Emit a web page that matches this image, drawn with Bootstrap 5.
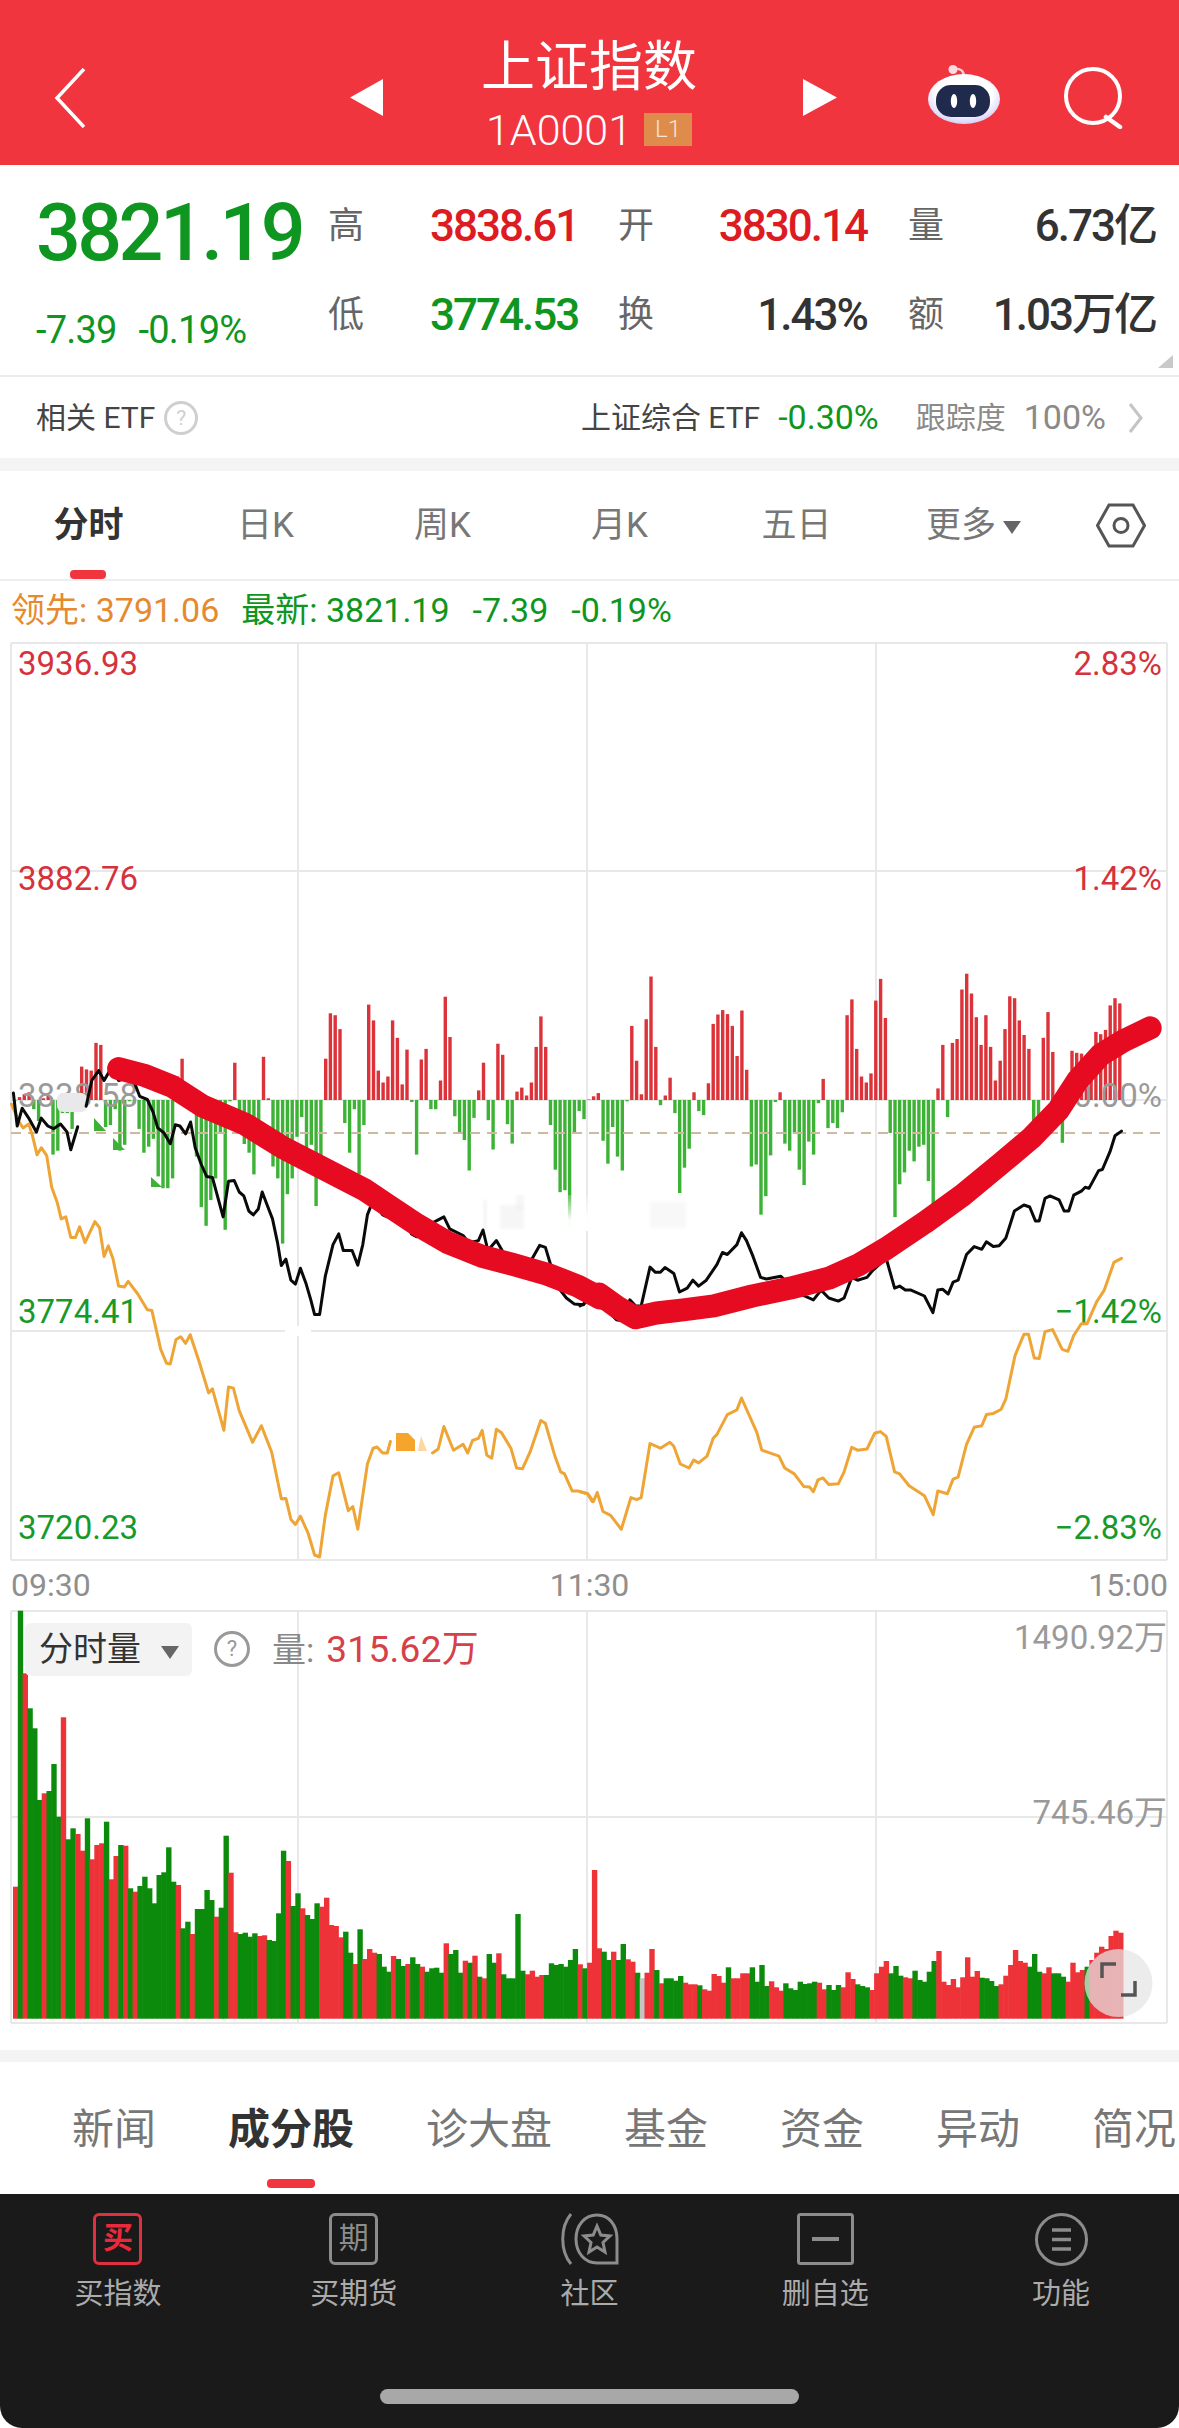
<!DOCTYPE html>
<html lang="zh-CN">
<head>
  <meta charset="UTF-8">
  <title>上证指数</title>
  <link href="https://cdn.jsdelivr.net/npm/bootstrap@5.3.3/dist/css/bootstrap.min.css" rel="stylesheet">
  <style>
    html, body { margin: 0; background: #fff; }
    body { width: 1179px; height: 2428px; overflow: hidden; font-family: Roboto, "Noto Sans CJK SC", sans-serif; color: #333; }
    svg { display: block; }
    svg text { font-family: Roboto, "Noto Sans CJK SC", sans-serif; }
    .up { color: #dc1c22; }
    .down { color: #0f9620; }

    .app-header { height: 165px; padding-top: 30px; background: #f0353f; color: #fff; }
    .hdr-back { width: 350px; padding-left: 54px; }
    .hdr-title { width: 420px; padding-right: 8px; }
    .hdr-title h1 { margin: -6px 0 0; font-size: 54px; line-height: 68px; font-weight: 400; letter-spacing: 0; }
    .hdr-code { font-size: 43px; line-height: 52px; font-weight: 300; margin-top: 2px; }
    .lv-tag { width: 48px; height: 33px; margin-left: 12px; background: #de8b4c; color: #f6e6d0; font-size: 24px; line-height: 33px; text-align: center; font-weight: 300; }

    .quote-box { height: 210px; padding-top: 16px; }
    .quote-left { width: 328px; padding-left: 36px; }
    .price-big { margin-top: 8px; height: 88px; font-size: 79px; line-height: 88px; font-weight: 500; letter-spacing: -3.6px; color: #0f9620; }
    .price-sub { margin-top: 31px; font-size: 38px; line-height: 44px; color: #0f9620; letter-spacing: -.8px; }
    .price-sub span + span { margin-left: 22px; }
    .quote-grid { display: grid; grid-template-columns: 102px 188px 100px 190px 60px 188px; grid-auto-rows: 89px; align-items: center; }
    .q-label { font-size: 36px; color: #666; }
    .q-val { font-size: 44px; font-weight: 500; letter-spacing: -2px; }
    .q-right { text-align: right; }
    .q-pad { padding-right: 41px; }
    .corner-mark { right: 6px; bottom: 7px; width: 0; height: 0; border-left: 15px solid transparent; border-bottom: 13px solid #c9c9c9; }

    .etf-row { height: 83px; border-top: 2px solid #ececec; padding: 0 36px; font-size: 30px; color: #444; }
    .help-dot { display: inline-block; border: 3px solid #cfcfcf; border-radius: 50%; color: #cfcfcf; text-align: center; }
    .etf-row .help-dot { width: 34px; height: 34px; margin-left: 9px; font-size: 21px; line-height: 28px; }
    .etf-num { font-size: 34px; }
    .etf-gray { color: #8a8a8a; }
    .etf-pct { margin-left: 18px; }
    .etf-track { margin-left: 37px; }
    .etf-chev { margin-left: 22px; }

    .gray-band { height: 13px; background: #f4f4f4; }
    .period-tabs { height: 110px; border-bottom: 2px solid #eee; }
    .period-tab { width: 177px; text-align: center; font-size: 35px; line-height: 110px; color: #777; position: relative; }
    .period-tab.on { color: #333; font-weight: 700; }
    .period-tab.on::after { content: ""; position: absolute; left: 70px; bottom: 0; width: 36px; height: 9px; border-radius: 4px; background: #f0353f; }
    .period-gear { width: 117px; }
    .caret-d { display: inline-block; width: 0; height: 0; margin-left: 7px; vertical-align: middle; border-left: 9px solid transparent; border-right: 9px solid transparent; border-top: 13px solid #666; }

    .info-row { height: 61px; padding-left: 11px; font-size: 34px; line-height: 58px; white-space: nowrap; }
    .info-lead { color: #e58a2f; margin-right: 22px; }
    .info-new { color: #0f9620; }
    .info-new span { margin-left: 23px; }

    .lbl { font-size: 33px; dominant-baseline: central; }
    .lbl-up { fill: #d5323c; }
    .lbl-down { fill: #169a2a; }
    .lbl-mid { fill: #9a9a9a; }
    .lbl-vol { fill: #9a9a9a; font-size: 33px; }

    .time-row { height: 48px; padding: 0 11px; font-size: 32px; line-height: 46px; color: #8f8f8f; }
    .vol-wrap { height: 414px; }
    .vol-chip { left: 25px; top: 13px; width: 167px; height: 53px; border-radius: 6px; background: #f3f3f3; font-size: 34px; line-height: 53px; padding-left: 14px; color: #333; white-space: nowrap; }
    .vol-chip .caret-d { margin-left: 20px; }
    .vol-help { left: 214px; top: 21px; width: 36px; height: 36px; border-color: #999; color: #999; font-size: 22px; line-height: 29px; }
    .vol-text { left: 272px; top: 13px; font-size: 34px; line-height: 53px; color: #888; white-space: nowrap; }
    .vol-text span { color: #d64048; margin-left: 12px; font-size: 37px; letter-spacing: .3px; }

    .news-tabs { height: 132px; padding-left: 72px; padding-top: 3px; gap: 72px; overflow: hidden; font-size: 42px; line-height: 129px; color: #777; white-space: nowrap; }
    .news-tab { position: relative; flex: none; }
    .news-tab.on { color: #333; font-weight: 700; }
    .news-tab.on::after { content: ""; position: absolute; left: 39px; bottom: 6px; width: 48px; height: 9px; border-radius: 4px; background: #f0353f; }

    .bottom-nav { height: 234px; padding-top: 19px; background: #1a1a1a; border-radius: 0 0 22px 22px; position: relative; }
    .nav-cell { width: 20%; text-align: center; color: #ababab; font-size: 29px; line-height: 40px; }
    .nav-ico { height: 52px; margin-bottom: 9px; display: flex; justify-content: center; }
    .ico-box { width: 49px; height: 52px; border: 3px solid #8c8c8c; border-radius: 6px; font-size: 30px; line-height: 44px; color: #8c8c8c; }
    .ico-box.red { border-color: #e0303f; color: #ea2a3c; font-weight: 700; }
    .home-bar { left: 380px; top: 195px; width: 419px; height: 15px; border-radius: 8px; background: #a8a8a8; }
  </style>
</head>
<body>

  <header class="app-header d-flex align-items-center">
    <div class="hdr-back">
      <svg width="32" height="60" viewBox="0 0 32 60"><path d="M30 1 L3 30 L30 59" fill="none" stroke="#fff" stroke-width="3.5"/></svg>
    </div>
    <svg width="33" height="37" viewBox="0 0 33 37"><path d="M33 0 V37 L0 18.5Z" fill="#fff"/></svg>
    <div class="hdr-title text-center">
      <h1>上证指数</h1>
      <div class="hdr-code d-flex justify-content-center align-items-center">1A0001<span class="lv-tag">L1</span></div>
    </div>
    <svg width="34" height="37" viewBox="0 0 34 37"><path d="M0 0 V37 L34 18.5Z" fill="#fff"/></svg>
    <svg class="ms-auto" width="72" height="66" viewBox="0 0 72 66" style="margin-right:64px">
      <defs><radialGradient id="robotHead" cx=".5" cy=".4" r=".65"><stop offset=".6" stop-color="#ffffff"/><stop offset="1" stop-color="#cbc4f5"/></radialGradient></defs>
      <path d="M25 4 C33 3 36 6 36 12" fill="none" stroke="#f6c9d2" stroke-width="2.500"/>
      <circle cx="25" cy="4.500" r="4.500" fill="#f9dbe0"/>
      <ellipse cx="36" cy="34" rx="36" ry="25" fill="url(#robotHead)"/>
      <rect x="8" y="20" width="54" height="32" rx="15" fill="#1f2a4d"/>
      <ellipse cx="26" cy="36" rx="3.200" ry="7" fill="#fff"/>
      <ellipse cx="45" cy="36" rx="3.200" ry="7" fill="#fff"/>
    </svg>
    <svg width="60" height="62" viewBox="0 0 60 62" style="margin-right:55px">
      <circle cx="29" cy="29" r="27" fill="none" stroke="#fff" stroke-width="4"/>
      <path d="M42 50 L56 60" stroke="#fff" stroke-width="4.500" stroke-linecap="round"/>
    </svg>
  </header>

  <section class="quote-box d-flex position-relative">
    <div class="quote-left">
      <div class="price-big">3821.19</div>
      <div class="price-sub"><span>-7.39</span><span>-0.19%</span></div>
    </div>
    <div class="quote-grid">
      <div class="q-label">高</div><div class="q-val up">3838.61</div>
      <div class="q-label">开</div><div class="q-val up q-right q-pad">3830.14</div>
      <div class="q-label">量</div><div class="q-val q-right">6.73亿</div>
      <div class="q-label">低</div><div class="q-val down">3774.53</div>
      <div class="q-label">换</div><div class="q-val q-right q-pad">1.43%</div>
      <div class="q-label">额</div><div class="q-val q-right">1.03万亿</div>
    </div>
    <span class="corner-mark position-absolute"></span>
  </section>

  <div class="etf-row d-flex align-items-center">
    <span>相关 ETF</span><span class="help-dot">?</span>
    <span class="ms-auto">上证综合 ETF</span>
    <span class="down etf-num etf-pct">-0.30%</span>
    <span class="etf-gray etf-track">跟踪度</span>
    <span class="etf-gray etf-num etf-pct">100%</span>
    <svg class="etf-chev" width="15" height="30" viewBox="0 0 15 30"><path d="M2 1 L13 15 L2 29" fill="none" stroke="#c4c4c4" stroke-width="3"/></svg>
  </div>

  <div class="gray-band"></div>

  <nav class="period-tabs d-flex">
    <div class="period-tab on">分时</div>
    <div class="period-tab">日K</div>
    <div class="period-tab">周K</div>
    <div class="period-tab">月K</div>
    <div class="period-tab">五日</div>
    <div class="period-tab">更多<span class="caret-d"></span></div>
    <div class="period-gear d-flex justify-content-center align-items-center">
      <svg width="50" height="45" viewBox="0 0 50 45"><path d="M1.500 22.500 L13 2 H37 L48.500 22.500 L37 43 H13Z" fill="none" stroke="#555" stroke-width="3"/><circle cx="25" cy="22.500" r="7" fill="none" stroke="#555" stroke-width="3"/></svg>
    </div>
  </nav>

  <div class="info-row">
    <span class="info-lead">领先: 3791.06</span><span class="info-new">最新: 3821.19<span>-7.39</span><span>-0.19%</span></span>
  </div>

  <svg id="priceChart" width="1179" height="920" viewBox="0 642 1179 920"></svg>

  <div class="time-row d-flex justify-content-between">
    <span>09:30</span><span>11:30</span><span>15:00</span>
  </div>

  <div class="vol-wrap position-relative">
    <svg id="volChart" width="1179" height="414" viewBox="0 1610 1179 414"></svg>
    <div class="vol-chip position-absolute">分时量<span class="caret-d"></span></div>
    <span class="help-dot vol-help position-absolute">?</span>
    <div class="vol-text position-absolute">量:<span>315.62万</span></div>
  </div>

  <div style="height:26px"></div>
  <div class="gray-band" style="height:12px"></div>

  <div class="news-tabs d-flex">
    <div class="news-tab">新闻</div>
    <div class="news-tab on">成分股</div>
    <div class="news-tab">诊大盘</div>
    <div class="news-tab">基金</div>
    <div class="news-tab">资金</div>
    <div class="news-tab">异动</div>
    <div class="news-tab">简况</div>
  </div>

  <footer class="bottom-nav d-flex">
    <div class="nav-cell">
      <div class="nav-ico"><div class="ico-box red">买</div></div>买指数
    </div>
    <div class="nav-cell">
      <div class="nav-ico"><div class="ico-box">期</div></div>买期货
    </div>
    <div class="nav-cell">
      <div class="nav-ico">
        <svg width="60" height="52" viewBox="0 0 60 52" fill="none" stroke="#8c8c8c" stroke-width="3">
          <path d="M12 1 C1 14 1 38 12 51"/>
          <path d="M38 2 C50 2 58 12 58 26 V50 H38 C26 50 17 40 17 26 C17 12 26 2 38 2Z"/>
          <path d="M38 13 L41.800 22 L51 23 L44 29.500 L46 39 L38 34 L30 39 L32 29.500 L25 23 L34.200 22Z"/>
        </svg>
      </div>社区
    </div>
    <div class="nav-cell">
      <div class="nav-ico">
        <svg width="57" height="52" viewBox="0 0 57 52"><rect x="1.500" y="1.500" width="54" height="49" rx="2" fill="none" stroke="#8c8c8c" stroke-width="3"/><path d="M15 26 H42" stroke="#8c8c8c" stroke-width="4"/></svg>
      </div>删自选
    </div>
    <div class="nav-cell">
      <div class="nav-ico">
        <svg width="53" height="53" viewBox="0 0 53 53" fill="none" stroke="#8c8c8c"><circle cx="26.500" cy="26.500" r="25" stroke-width="3"/><path d="M17 17 H36 M17 26.500 H36 M17 36 H36" stroke-width="3.500"/></svg>
      </div>功能
    </div>
    <div class="home-bar position-absolute"></div>
  </footer>

<script>
  // values below were read off the screenshot: x/y are positions in two crops of the chart
  const crop = (x0, y0, sx, sy) => ([x, y]) => [x0 + x / sx, y0 + y / sy];
  const left = crop(0, 950, 2.613, 2.529);
  const right = crop(580, 950, 2.613, 2.529);
  const pts = (list, fn) => list.map(fn).map(p => p[0].toFixed(1) + "," + p[1].toFixed(1)).join(" ");
  const line = (points, color, w) => `<polyline points="${points}" fill="none" stroke="${color}" stroke-width="${w}" stroke-linejoin="round" stroke-linecap="round"/>`;

  const blackA = [[35,362],[45,445],[58,400],[75,425],[95,460],[108,425],[125,445],[140,452],[158,440],[175,460],[185,505],[203,447]];
  const blackB = [[225,395],[240,330],[258,305],[272,330],[290,300],[310,330],[345,320],[365,370],[385,378],[400,410],[412,450],[428,462],[445,490],[458,442],[470,445],[485,465],[498,435],[510,500],[525,540],[540,573],[555,575],[583,675],[597,585],[612,583],[625,612],[637,622],[650,660],[662,670],[675,655],[685,612],[700,650],[712,680],[725,740],[735,798],[747,782],[760,835],[772,845],[785,805],[800,845],[812,885],[822,922],[835,922],[850,825],[870,745],[885,718],[897,760],[920,760],[935,797],[948,745],[960,670],[972,640],[985,650],[1000,670],[1012,675],[1025,650],[1050,680],[1070,700],[1075,718],[1088,725],[1100,700],[1130,690],[1160,675],[1175,705],[1210,722],[1225,740],[1250,735],[1262,708],[1275,760],[1297,735],[1315,765],[1345,815],[1360,820],[1385,790],[1410,747],[1425,752],[1440,800],[1460,855],[1480,880],[1500,895],[1525,897],[1545,870]];
  const blackC = [[0,900],[10,895],[25,875],[55,905],[70,910],[95,935],[110,938],[130,885],[145,900],[160,900],[183,802],[197,815],[210,815],[222,803],[245,818],[260,865],[280,855],[295,835],[310,850],[330,835],[358,795],[372,765],[385,770],[410,745],[422,715],[435,735],[452,775],[472,828],[487,832],[525,825],[540,840],[575,870],[610,885],[630,860],[650,880],[675,888],[690,880],[710,828],[725,835],[750,828],[765,810],[800,780],[822,855],[835,850],[850,860],[865,860],[900,875],[922,917],[935,860],[948,858],[962,870],[975,840],[988,835],[1010,770],[1030,750],[1050,757],[1062,738],[1080,750],[1095,748],[1113,728],[1135,660],[1160,645],[1175,650],[1190,685],[1200,685],[1215,628],[1228,622],[1252,632],[1265,660],[1277,660],[1290,620],[1310,610],[1320,600],[1330,603],[1355,558],[1365,555],[1385,510],[1398,470],[1415,458]];

  const orangeA = [[30,390],[50,435],[60,450],[75,440],[85,470],[97,518],[108,500],[122,520],[135,600],[150,640],[160,680],[172,675],[185,727],[197,727],[208,700],[222,740],[248,687],[260,702],[272,775],[283,748],[295,780],[310,850],[325,852],[335,838],[360,870],[385,910],[397,912],[420,1010],[435,1045],[445,1047],[460,985],[472,978],[485,995],[497,973],[520,1040],[545,1120],[555,1110],[585,1215],[597,1105],[610,1108],[625,1165],[660,1245],[683,1203],[710,1270],[735,1388],[747,1387],[760,1440],[772,1453],[785,1432],[805,1475],[822,1530],[835,1535],[850,1430],[870,1330],[885,1322],[910,1418],[922,1408],[935,1465],[960,1300],[975,1260],[985,1257],[1000,1272],[1012,1272],[1020,1243]];
  const orangeB = [[1130,1272],[1145,1262],[1160,1205],[1185,1265],[1210,1250],[1222,1272],[1235,1240],[1250,1235],[1260,1215],[1272,1278],[1285,1285],[1297,1212],[1310,1220],[1335,1260],[1350,1310],[1365,1312],[1385,1270],[1413,1190],[1425,1197],[1450,1280],[1465,1320],[1475,1325],[1495,1368],[1510,1368],[1535,1375],[1548,1395]];
  const orangeC = [[0,1370],[20,1375],[35,1395],[45,1372],[60,1420],[80,1430],[108,1465],[133,1385],[148,1390],[160,1385],[183,1248],[210,1260],[235,1245],[245,1255],[262,1300],[285,1310],[297,1290],[310,1297],[332,1280],[348,1235],[358,1225],[385,1175],[410,1163],[422,1133],[462,1220],[475,1265],[520,1280],[535,1310],[560,1325],[585,1357],[600,1358],[610,1370],[622,1340],[635,1335],[650,1352],[675,1350],[690,1320],[710,1258],[725,1265],[750,1262],[770,1222],[785,1218],[800,1230],[822,1320],[835,1325],[860,1355],[900,1380],[923,1428],[935,1368],[960,1375],[975,1338],[988,1333],[1010,1250],[1030,1207],[1050,1203],[1062,1175],[1080,1172],[1100,1162],[1113,1135],[1137,1025],[1160,972],[1172,972],[1187,1032],[1200,1033],[1215,965],[1235,960],[1260,1010],[1275,1015],[1290,975],[1310,945],[1325,945],[1350,890],[1370,860],[1395,790],[1415,780]];

  const penA = [[310,300],[380,318],[450,345],[530,395],[640,440],[740,500],[840,550],[950,605],[1020,650],[1090,695],[1170,740],[1260,775],[1340,795],[1430,820],[1510,850],[1568,880]];
  const penB = [[50,870],[100,905],[145,930],[200,918],[270,910],[350,900],[450,875],[550,855],[650,830],[730,795],[800,755],[900,690],[1000,620],[1100,540],[1180,475],[1250,405],[1300,330],[1360,265],[1420,230],[1490,197]];

  const flow = [380,372,365,360,400,430,375,368,515,505,410,410,450,370,295,302,305,235,240,445,440,400,505,490,380,385,450,510,495,475,570,600,600,575,320,275,378,385,520,648,695,630,575,460,705,380,285,410,488,510,565,450,270,375,545,575,740,615,575,470,420,515,490,645,570,275,160,165,200,435,510,400,565,440,138,178,305,335,320,178,222,340,252,382,515,277,250,400,400,330,118,220,418,460,478,555,422,355,285,428,502,237,265,438,487,358,348,368,335,245,168,245,440,553,610,605,700,458,405,425,378,370,362,480,538,445,520,555,380,192,280,365,175,67,245,390,368,323,410,612,548,500,360,405,415,337,187,163,152,162,192,268,153,303,545,540,667,620,517,382,360,487,505,462,553,592,482,515,385,326,448,435,448,408,165,125,250,320,335,312,128,73,172,460,673,590,560,505,532,495,490,582,660,350,240,420,235,225,100,60,110,170,240,165,245,330,280,200,117,122,178,215,250,455,450,222,157,258,385,485,375,255,260,262,270,330,207,213,202,140,122,135];

  const vols = "r920 g92 r280 g385 g445 g660 r640 g633 g552 g710 r412 g778 g745 r762 r812 g715 r838 r795 r790 g725 r898 r828 g795 r797 g925 r935 g918 g890 g925 g970 g885 g877 g802 g905 r915 g1045 g1025 r1062 g987 g987 g930 g960 r1010 g983 g767 r878 r1057 g1062 g1058 g1070 g1060 r1068 r1066 g1080 g1083 g1000 g812 r843 g978 g940 r985 g1005 g1017 g970 r980 r953 r1035 r1038 r1072 g1055 g1118 r1152 g1048 r1137 r1107 r1118 g1122 g1160 g1175 r1128 g1137 g1158 r1152 g1132 g1152 r1160 g1175 g1165 g1163 g1178 r1090 g1122 g1110 g1178 r1142 g1148 r1127 g1190 r1195 g1122 g1148 r1120 g1183 g1195 g1195 g1002 g1172 r1183 r1172 r1190 r1185 g1185 g1150 g1155 g1152 g1160 g1140 g1107 r1153 g1165 r1148 r870 r1105 g1115 g1140 r1115 g1140 g1092 r1138 r1145 g1178 x1195 r1178 r1107 g1170 r1210 g1195 g1195 g1202 g1188 r1208 r1213 r1213 g1216 r1228 r1232 r1182 r1188 r1208 g1162 r1195 r1195 r1180 r1180 g1162 g1205 g1155 g1218 r1204 r1222 r1232 g1210 g1225 g1230 g1205 g1212 g1210 g1205 r1208 r1228 g1215 g1230 g1215 r1222 r1177 r1197 g1213 g1218 g1222 r1230 r1180 r1160 r1143 g1180 g1158 g1187 r1192 r1195 g1172 g1200 g1205 g1175 g1143 r1113 r1205 r1215 r1197 r1222 r1192 r1132 r1190 r1173 g1193 g1195 g1203 g1218 r1213 r1187 r1155 r1110 r1143 r1148 g1160 g1122 g1175 r1180 r1162 g1180 g1180 g1190 r1205 r1148 r1177 r1170 g1160 r1140 r1118 r1100 r1107 r1068 r1052 r1058".split(" ");

  const pitch = 4.784;
  const zeroY = 1100;
  let hist = "";
  flow.forEach((v, i) => {
    const y = 950 + v / 2.529;
    const x = 13 + pitch * i;
    hist += y < zeroY
      ? `<rect x="${x.toFixed(1)}" y="${y.toFixed(1)}" width="3.400" height="${(zeroY - y).toFixed(1)}" fill="#dc3239"/>`
      : `<rect x="${x.toFixed(1)}" y="${zeroY}" width="3.400" height="${(y - zeroY + 1).toFixed(1)}" fill="#3eb237"/>`;
  });

  const grid = (xs, ys, x1, x2, y1, y2) =>
    xs.map(x => `<line x1="${x}" x2="${x}" y1="${y1}" y2="${y2}" stroke="#e8e8e8" stroke-width="2"/>`).join("") +
    ys.map(y => `<line x1="${x1}" x2="${x2}" y1="${y}" y2="${y}" stroke="#e8e8e8" stroke-width="2"/>`).join("");

  const label = (text, x, y, cls, anchor) => `<text x="${x}" y="${y}" class="lbl ${cls}" text-anchor="${anchor || "start"}">${text}</text>`;

  document.getElementById("priceChart").innerHTML =
    `<defs>
       <filter id="smudge" x="-10%" y="-20%" width="120%" height="140%"><feGaussianBlur stdDeviation="1.800"/></filter>
       <linearGradient id="fadeBars" x1="0" y1="0" x2="0" y2="1"><stop offset="0" stop-color="#fff" stop-opacity=".2"/><stop offset=".7" stop-color="#fff" stop-opacity=".98"/></linearGradient>
     </defs>` +
    grid([11, 298, 587, 876, 1167], [643, 871, 1100, 1331, 1560], 11, 1167, 643, 1560) +
    hist +
    `<line x1="11" x2="1167" y1="1133" y2="1133" stroke="#cdb9a2" stroke-width="2" stroke-dasharray="10 7"/>` +
    label("3936.93", 18, 663, "lbl-up") +
    label("3882.76", 18, 878, "lbl-up") +
    label("3838.58", 18, 1095, "lbl-mid") +
    label("3774.41", 18, 1311, "lbl-down") +
    label("3720.23", 18, 1527, "lbl-down") +
    label("2.83%", 1162, 663, "lbl-up", "end") +
    label("1.42%", 1162, 878, "lbl-up", "end") +
    label("0.00%", 1162, 1095, "lbl-mid", "end") +
    label("−1.42%", 1162, 1311, "lbl-down", "end") +
    label("−2.83%", 1162, 1527, "lbl-down", "end") +
    // smudged patches in the shot
    `<rect x="57" y="1093" width="30" height="19" rx="6" fill="#e9e9eb"/>` +
    `<rect x="285" y="1326" width="26" height="10" fill="#fff"/>` +
    `<rect x="483" y="1195" width="204" height="36" fill="url(#fadeBars)"/>` +
    `<g filter="url(#smudge)" fill="#ececec" fill-opacity=".45"><rect x="500" y="1205" width="24" height="24"/><rect x="516" y="1195" width="8" height="14"/><rect x="650" y="1202" width="36" height="26" fill-opacity=".35"/><rect x="484" y="1200" width="2" height="30" fill="#d8d8d8"/></g>` +
    `<polygon points="94,1118 106,1131 94,1131" fill="#3eb237"/>` +
    `<polygon points="113,1138 125,1150 113,1150" fill="#3eb237"/>` +
    `<polygon points="151,1177 162,1187 151,1187" fill="#3eb237"/>` +
    `<polygon points="396,1433 408,1433 415,1440 415,1451 396,1451" fill="#f5a52c"/>` +
    `<polygon points="418,1451 421,1436 427,1451" fill="#fbd8a0"/>` +
    line(pts(orangeA, left), "#eea536", 3) +
    line(pts(orangeB, left), "#eea536", 3) +
    line(pts(orangeC, right), "#eea536", 3) +
    line(pts(blackA, left), "#0a0a0a", 3) +
    line(pts(blackB, left), "#0a0a0a", 3) +
    line(pts(blackC, right), "#0a0a0a", 3) +
    line(pts(penA, left) + " " + pts(penB, right), "#e60b20", 23);

  let volBars = "";
  const volFill = { r: "#ee3338", g: "#0b8a0b", x: "#c4c4c4" };
  vols.forEach((v, i) => {
    const y = 1580 + parseInt(v.slice(1)) / 3;
    volBars += `<rect x="${(13 + pitch * i).toFixed(1)}" y="${y.toFixed(1)}" width="${pitch + 0.6}" height="${(2018.700 - y).toFixed(1)}" fill="${volFill[v[0]]}"/>`;
  });

  document.getElementById("volChart").innerHTML =
    grid([11, 298, 587, 876, 1167], [1611, 1817, 2023], 11, 1167, 1611, 2023) +
    volBars +
    `<text x="1167" y="1637" class="lbl lbl-vol" text-anchor="end">1490.92万</text>` +
    `<text x="1167" y="1812" class="lbl lbl-vol" text-anchor="end">745.46万</text>` +
    `<circle cx="1118.500" cy="1983" r="34" fill="#e4e4e4" fill-opacity=".72"/>` +
    `<path d="M1102 1978 V1964 H1116 M1135 1981 V1995 H1121" fill="none" stroke="#555" stroke-width="3.500"/>`;
</script>
<script src="https://cdn.jsdelivr.net/npm/bootstrap@5.3.3/dist/js/bootstrap.bundle.min.js"></script>
</body>
</html>
